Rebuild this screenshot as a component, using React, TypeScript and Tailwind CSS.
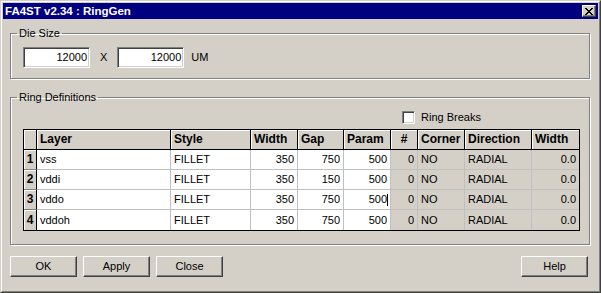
import React from 'react'

type Row = {
  layer: string
  style: string
  width: string
  gap: string
  param: string
  count: string
  corner: string
  dir: string
  w2: string
  caret?: boolean
}

const rows: Row[] = [
  { layer: 'vss', style: 'FILLET', width: '350', gap: '750', param: '500', count: '0', corner: 'NO', dir: 'RADIAL', w2: '0.0' },
  { layer: 'vddi', style: 'FILLET', width: '350', gap: '150', param: '500', count: '0', corner: 'NO', dir: 'RADIAL', w2: '0.0' },
  { layer: 'vddo', style: 'FILLET', width: '350', gap: '750', param: '500', count: '0', corner: 'NO', dir: 'RADIAL', w2: '0.0', caret: true },
  { layer: 'vddoh', style: 'FILLET', width: '350', gap: '750', param: '500', count: '0', corner: 'NO', dir: 'RADIAL', w2: '0.0' },
]

const headers = ['Layer', 'Style', 'Width', 'Gap', 'Param', '#', 'Corner', 'Direction', 'Width']

function Button({ label }: { label: string }) {
  return (
    <button className="w-[67px] h-[21px] bg-[#d4d0c8] border border-t-white border-l-white border-r-[#404040] border-b-[#404040] shadow-[inset_-1px_-1px_0_#808080] text-[11px] leading-[13px] text-black flex items-center justify-center">
      {label}
    </button>
  )
}

function NumInput({ value }: { value: string }) {
  return (
    <div className="w-[67px] h-[21px] bg-white border border-t-[#808080] border-l-[#808080] border-r-white border-b-white shadow-[inset_1px_1px_0_#404040,inset_-1px_-1px_0_#d4d0c8] flex items-center justify-end pr-[2px]">
      {value}
    </div>
  )
}

function CloseGlyph() {
  // pixel style X of the classic caption button
  return (
    <svg width="8" height="7" viewBox="0 0 8 7" shapeRendering="crispEdges">
      <path d="M0 0h2v1H0zM6 0h2v1H6zM1 1h2v1H1zM5 1h2v1H5zM2 2h4v1H2zM3 3h2v1H3zM2 4h4v1H2zM1 5h2v1H1zM5 5h2v1H5zM0 6h2v1H0zM6 6h2v1H6z" fill="#000" />
    </svg>
  )
}

export default function App() {
  const cell = 'flex items-center h-[20px] border-b border-r text-[11px] leading-[13px] overflow-hidden whitespace-nowrap text-black'
  const white = 'bg-white border-[#c0c0c0]'
  const grey = 'bg-[#d4d0c8] border-[#c0c0c0]'

  return (
    <div
      className="w-[601px] h-[293px] bg-[#d4d0c8] border border-t-[#d4d0c8] border-l-[#d4d0c8] border-r-[#404040] border-b-[#404040] text-black text-[11px] leading-[13px]"
      style={{ fontFamily: '"Liberation Sans", Arial, sans-serif' }}
    >
      <div className="h-full border border-t-white border-l-white border-r-[#808080] border-b-[#808080] p-px flex flex-col">
        {/* title bar */}
        <div className="h-[16px] bg-[#000080] flex items-center justify-between pl-[2px] pr-[2px]">
          <span className="text-white font-bold text-[11.5px] leading-[13px]">FA4ST v2.34 : RingGen</span>
          <div className="w-[14px] h-[12px] bg-[#d4d0c8] border border-t-white border-l-white border-r-[#404040] border-b-[#404040] shadow-[inset_-1px_-1px_0_#808080] flex items-center justify-center">
            <CloseGlyph />
          </div>
        </div>

        {/* Die Size */}
        <fieldset className="mt-[8px] ml-[7px] w-[580px] border border-[#808080] shadow-[inset_1px_1px_0_#fff,1px_1px_0_#fff] p-0 m-0">
          <legend className="ml-[6px] px-[2px] leading-[13px]">Die Size</legend>
          <div className="flex items-center pl-[12px] pt-[7px] pb-[10px]">
            <NumInput value="12000" />
            <span className="ml-[10px]">X</span>
            <div className="ml-[10px]">
              <NumInput value="12000" />
            </div>
            <span className="ml-[7px]">UM</span>
          </div>
        </fieldset>

        {/* Ring Definitions */}
        <fieldset className="mt-[12px] ml-[7px] w-[580px] border border-[#808080] shadow-[inset_1px_1px_0_#fff,1px_1px_0_#fff] p-0 m-0">
          <legend className="ml-[6px] px-[2px] leading-[13px]">Ring Definitions</legend>
          <div className="pl-[12px] pt-[7px] pb-[13px]">
            <div className="flex items-center ml-[379px] h-[13px]">
              <div className="w-[13px] h-[13px] bg-white border border-t-[#808080] border-l-[#808080] border-r-white border-b-white shadow-[inset_1px_1px_0_#404040,inset_-1px_-1px_0_#d4d0c8]" />
              <span className="ml-[6px]">Ring Breaks</span>
            </div>

            <div className="mt-[5px] w-[557px] border border-black grid grid-cols-[13px_134px_80px_47px_46px_47px_27px_47px_67px_47px]">
              {/* header */}
              <div className={`${cell} bg-[#d4d0c8] border-black shadow-[inset_1px_1px_0_#fff]`} />
              {headers.map((h, i) => (
                <div
                  key={i}
                  className={`${cell} bg-[#d4d0c8] border-black shadow-[inset_1px_1px_0_#fff] font-bold text-[12px] ${h === '#' ? 'justify-center' : 'pl-[3px]'} ${i === headers.length - 1 ? 'border-r-0' : ''}`}
                >
                  {h}
                </div>
              ))}

              {rows.map((r, i) => {
                const last = i === rows.length - 1
                const bb = last ? 'border-b-0 h-[19px]' : ''
                return (
                  <React.Fragment key={i}>
                    <div className={`${cell} ${bb} bg-[#d4d0c8] border-b-[#808080] border-r-black shadow-[inset_1px_1px_0_#fff] justify-center font-bold text-[12px]`}>
                      {i + 1}
                    </div>
                    <div className={`${cell} ${bb} ${white} pl-[3px]`}>{r.layer}</div>
                    <div className={`${cell} ${bb} ${white} pl-[3px]`}>{r.style}</div>
                    <div className={`${cell} ${bb} ${white} justify-end pr-[3px]`}>{r.width}</div>
                    <div className={`${cell} ${bb} ${white} justify-end pr-[3px]`}>{r.gap}</div>
                    <div className={`${cell} ${bb} ${white} justify-end pr-[3px]`}>
                      {r.param}
                      {r.caret && <span className="inline-block w-px h-[12px] bg-black -mr-px" />}
                    </div>
                    <div className={`${cell} ${bb} ${grey} justify-end pr-[3px]`}>{r.count}</div>
                    <div className={`${cell} ${bb} ${grey} pl-[3px]`}>{r.corner}</div>
                    <div className={`${cell} ${bb} ${grey} pl-[3px]`}>{r.dir}</div>
                    <div className={`${cell} ${bb} ${grey} justify-end pr-[3px] border-r-0`}>{r.w2}</div>
                  </React.Fragment>
                )
              })}
            </div>
          </div>
        </fieldset>

        {/* buttons */}
        <div className="mt-[11px] flex items-center pl-[7px] pr-[10px]">
          <div className="flex gap-[6px]">
            <Button label="OK" />
            <Button label="Apply" />
            <Button label="Close" />
          </div>
          <div className="ml-auto">
            <Button label="Help" />
          </div>
        </div>
      </div>
    </div>
  )
}
